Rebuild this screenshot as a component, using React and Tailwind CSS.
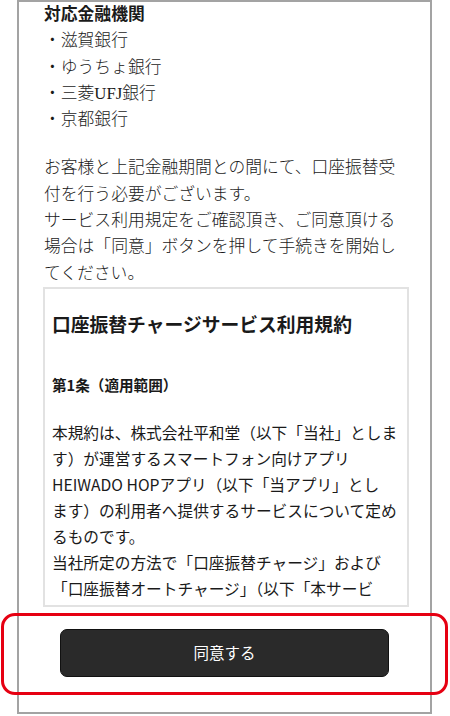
import React from "react";

const serif = { fontFamily: '"Liberation Serif", "Noto Sans CJK JP", serif' };
const sans = { fontFamily: '"Noto Sans CJK JP", "Liberation Sans", sans-serif' };

export default function App() {
  const banks = ["滋賀銀行", "ゆうちょ銀行", "三菱UFJ銀行", "京都銀行"];
  const intro = [
    "お客様と上記金融期間との間にて、口座振替受",
    "付を行う必要がございます。",
    "サービス利用規定をご確認頂き、ご同意頂ける",
    "場合は「同意」ボタンを押して手続きを開始し",
    "てください。",
  ];
  const body = [
    "本規約は、株式会社平和堂（以下「当社」としま",
    "す）が運営するスマートフォン向けアプリ",
    "HEIWADO HOPアプリ（以下「当アプリ」とし",
    "ます）の利用者へ提供するサービスについて定め",
    "るものです。",
    "当社所定の方法で「口座振替チャージ」および",
    "「口座振替オートチャージ」（以下「本サービ",
  ];
  return (
    <div className="relative w-[450px] h-[716px] bg-white overflow-hidden text-[#1a1a1a]">
      <div className="ml-[17px] w-[415px] h-[714px] border-2 border-[#a3a3a3] flex flex-col">
        <div className="pl-[25px] text-[16.8px] leading-[26.3px] font-light whitespace-nowrap" style={serif}>
          <div className="font-bold">対応金融機関</div>
          {banks.map((b) => (
            <div key={b}>・{b}</div>
          ))}
          <div className="mt-[22px]">
            {intro.map((l) => (
              <div key={l}>{l}</div>
            ))}
          </div>
        </div>
        <div
          className="ml-[24px] mr-[21px] h-[320px] shrink-0 border-2 border-[#e2e2e2] overflow-hidden pl-[7px] pr-[3px] pt-[21px] whitespace-nowrap"
          style={sans}
        >
          <div className="text-[18.8px] leading-[28px] font-bold text-[#1a1a1a]">
            口座振替チャージサービス利用規約
          </div>
          <div className="mt-[34px] text-[14.6px] leading-[26px] font-bold">
            第1条（適用範囲）
          </div>
          <div className="mt-[22px] text-[15.7px] leading-[26px]">
            {body.map((l) => (
              <div key={l}>{l}</div>
            ))}
          </div>
        </div>
        <button
          className="mt-[22px] mx-auto w-[329px] h-[48px] shrink-0 rounded-[7px] bg-[#2a2a2a] border border-[#111] text-white text-[15.5px] flex items-center justify-center"
          style={sans}
        >
          同意する
        </button>
      </div>
      <div className="absolute left-[1px] top-[613px] w-[447px] h-[82px] border-[3.5px] border-[#e60012] rounded-[14px] pointer-events-none" />
    </div>
  );
}
